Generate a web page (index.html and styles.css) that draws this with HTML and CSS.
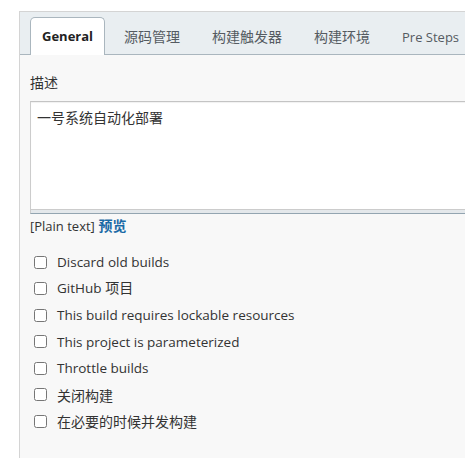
FILE: index.html
```html
<!DOCTYPE html>
<html lang="zh-CN">
<head>
<meta charset="utf-8">
<title>General</title>
<link rel="stylesheet" href="styles.css">
</head>
<body>
<div class="panel">
  <div class="tabbar">
    <div class="tab active"><span class="lt">General</span></div>
    <div class="tab">源码管理</div>
    <div class="tab">构建触发器</div>
    <div class="tab">构建环境</div>
    <div class="tab"><span class="lt">Pre Steps</span></div>
  </div>
  <div class="content">
    <div class="field-label">描述</div>
    <div class="textarea">一号系统自动化部署</div>
    <div class="textarea-handle"></div>
    <div class="preview-line"><span class="plain">[Plain text]</span> <a class="preview">预览</a></div>
    <ul class="options">
      <li class="option"><input type="checkbox" class="cb"><span class="opt-lt">Discard old builds</span></li>
      <li class="option"><input type="checkbox" class="cb"><span class="opt-mix"><span class="opt-lt">GitHub</span> 项目</span></li>
      <li class="option"><input type="checkbox" class="cb"><span class="opt-lt">This build requires lockable resources</span></li>
      <li class="option"><input type="checkbox" class="cb"><span class="opt-lt">This project is parameterized</span></li>
      <li class="option"><input type="checkbox" class="cb"><span class="opt-lt">Throttle builds</span></li>
      <li class="option"><input type="checkbox" class="cb"><span>关闭构建</span></li>
      <li class="option"><input type="checkbox" class="cb"><span>在必要的时候并发构建</span></li>
    </ul>
  </div>
</div>
</body>
</html>
```

FILE: styles.css
```css
html, body {
  margin: 0;
  padding: 0;
  background: #ffffff;
  overflow: hidden;
}

body {
  font-family: "Open Sans", "Noto Sans CJK SC", sans-serif;
  font-size: 14px;
  color: #333333;
  width: 465px;
  height: 458px;
}

.panel {
  margin: 11px 0 0 19px;
  width: 700px;
  height: 520px;
  border: 1px solid #d4d4d4;
  background: #f8f8f8;
}

.tabbar {
  display: flex;
  align-items: flex-end;
  gap: 6px;
  height: 42px;
  padding: 0 10px;
  background: #e9eef1;
  border-bottom: 1px solid #aab6be;
  box-sizing: content-box;
}

.tab {
  flex: none;
  height: 36px;
  line-height: 36px;
  padding: 0 12px;
  color: #555b61;
  white-space: nowrap;
  border: 1px solid transparent;
  border-bottom: none;
  margin-bottom: -1px;
}

.tab .lt {
  font-size: 13px;
}

.tab.active {
  background: #ffffff;
  border-color: #aab6be;
  border-radius: 5px 5px 0 0;
  font-weight: 700;
  color: #222222;
  height: 37px;
  padding: 0 11px 0 11px;
}

.content {
  padding: 18px 10px 0 10px;
}

.field-label {
  line-height: 20px;
  margin-bottom: 8px;
}

.textarea {
  height: 95px;
  border: 1px solid #cccccc;
  border-top-color: #c4c4c4;
  background: #ffffff;
  padding: 6px;
  line-height: 20px;
  box-shadow: inset 0 1px 1px rgba(0,0,0,0.06);
}

.textarea-handle {
  height: 3px;
  background: #e4e8eb;
  border-bottom: 1px solid #93a5b1;
  border-left: 1px solid #cccccc;
}

.preview-line {
  margin-top: 2px;
  line-height: 20px;
  color: #333333;
}

.plain {
  font-size: 13px;
}

.preview {
  color: #1a6aa6;
  font-weight: 700;
  text-decoration: none;
}

.options {
  list-style: none;
  margin: 13px 0 0 0;
  padding: 0;
}

.option {
  display: flex;
  align-items: center;
  height: 26.5px;
}

.opt-lt {
  font-size: 13.5px;
}

.opt-mix {
  line-height: 18px;
  position: relative;
  top: -1px;
}

.cb {
  width: 13px;
  height: 13px;
  margin: 0 10px 0 4px;
}
```
